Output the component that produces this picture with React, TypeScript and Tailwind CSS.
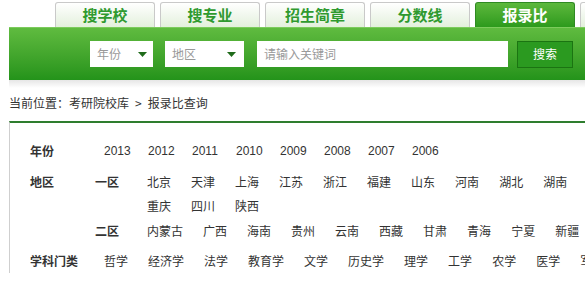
import React from "react";

const tabs = ["搜学校", "搜专业", "招生简章", "分数线", "报录比", ""];
const years = ["2013", "2012", "2011", "2010", "2009", "2008", "2007", "2006"];
const zone1a = ["北京", "天津", "上海", "江苏", "浙江", "福建", "山东", "河南", "湖北", "湖南"];
const zone1b = ["重庆", "四川", "陕西"];
const zone2 = ["内蒙古", "广西", "海南", "贵州", "云南", "西藏", "甘肃", "青海", "宁夏", "新疆"];
const subjects = ["哲学", "经济学", "法学", "教育学", "文学", "历史学", "理学", "工学", "农学", "医学", "军事学"];

const font = { fontFamily: '"Noto Sans CJK SC", "Liberation Sans", sans-serif' };

const Arrow: React.FC = () => (
  <svg width="9" height="5" viewBox="0 0 9 5" className="shrink-0">
    <path d="M0 0H9L4.5 5Z" fill="#1f6b1a" />
  </svg>
);

const ItemRow: React.FC<{ items: string[] }> = ({ items }) => (
  <div className="flex h-[24px] items-center gap-5 whitespace-nowrap">
    {items.map((x) => (
      <span key={x} className="cursor-pointer text-[12px] text-[#333]">
        {x}
      </span>
    ))}
  </div>
);

export default function App() {
  return (
    <div className="w-[585px] h-[281px] overflow-hidden bg-white" style={font}>
      {/* tabs */}
      <div className="flex gap-[5px] pl-[55px] pt-[2px] whitespace-nowrap">
        {tabs.map((t, i) =>
          i === 4 ? (
            <div
              key={i}
              className="flex h-[25px] w-[100px] shrink-0 items-center justify-center rounded-t-[3px] border border-b-0 border-[#2f8a22] bg-gradient-to-b from-[#5cb83c] to-[#2c9a1c] text-[15px] font-bold text-white"
            >
              {t}
            </div>
          ) : (
            <div
              key={i}
              className="flex h-[25px] w-[100px] shrink-0 items-center justify-center rounded-t-[3px] border border-b-0 border-[#c9c9c9] bg-gradient-to-b from-white to-[#e3f0dc] text-[15px] font-bold text-[#2f9a2f]"
            >
              {t}
            </div>
          )
        )}
      </div>

      {/* search bar */}
      <div className="ml-[9px] flex h-[53px] items-center border-t border-[#7ccb5c] bg-gradient-to-b from-[#5fbb3f] to-[#23931a] pl-[81px]">
        <div className="flex h-[26px] w-[63px] items-center justify-between bg-white pl-[7px] pr-[6px] text-[12px] text-[#999]">
          年份
          <Arrow />
        </div>
        <div className="ml-[12px] flex h-[26px] w-[79px] items-center justify-between bg-white pl-[7px] pr-[8px] text-[12px] text-[#999]">
          地区
          <Arrow />
        </div>
        <div className="ml-[13px] flex h-[26px] w-[251px] items-center bg-white pl-[7px] text-[12px] text-[#999]">
          请输入关键词
        </div>
        <div className="ml-[9px] flex h-[27px] w-[56px] items-center justify-center border border-[#1b7412] bg-[#2b9a20] text-[12px] text-white">
          搜索
        </div>
      </div>
      <div className="ml-[9px] h-[8px] bg-gradient-to-b from-[#e6e6e6] to-white" />

      {/* breadcrumb */}
      <div className="ml-[9px] flex h-[30px] items-center text-[12px] text-[#333]">
        当前位置：考研院校库<span className="mx-[6px]">&gt;</span>报录比查询
      </div>

      {/* filter panel */}
      <div className="ml-[9px] mt-[3px] w-[700px] border-l border-t-2 border-l-[#cfcfcf] border-t-[#2e7d2e] pl-[20px] pt-[16px]">
        <div className="flex h-[24px] items-center">
          <div className="w-[74px] text-[12px] font-bold text-[#333]">年份</div>
          {years.map((y) => (
            <span key={y} className="w-[44px] text-[12px] text-[#333]" style={{ fontFamily: '"Liberation Sans", sans-serif' }}>
              {y}
            </span>
          ))}
        </div>

        <div className="mt-[7px] flex">
          <div className="flex h-[24px] w-[65px] items-center text-[12px] font-bold text-[#333]">地区</div>
          <div className="flex flex-col">
            <div className="flex">
              <div className="flex h-[24px] w-[52px] items-center text-[12px] font-bold text-[#333]">一区</div>
              <div className="flex flex-col">
                <ItemRow items={zone1a} />
                <ItemRow items={zone1b} />
              </div>
            </div>
            <div className="mt-px flex">
              <div className="flex h-[24px] w-[52px] items-center text-[12px] font-bold text-[#333]">二区</div>
              <ItemRow items={zone2} />
            </div>
          </div>
        </div>

        <div className="mt-[6px] flex items-center">
          <div className="w-[74px] text-[12px] font-bold text-[#333]">学科门类</div>
          <ItemRow items={subjects} />
        </div>
      </div>
    </div>
  );
}
